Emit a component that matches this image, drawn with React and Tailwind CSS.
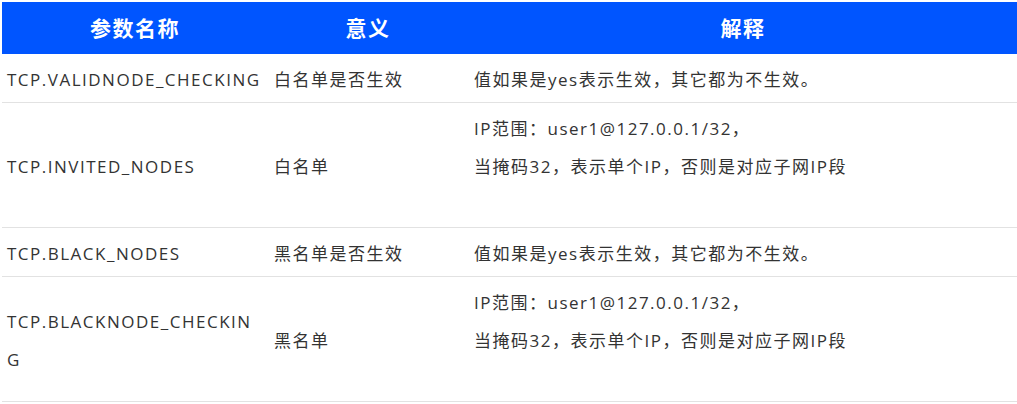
const rows = [
  {
    name: 'TCP.VALIDNODE_CHECKING',
    meaning: '白名单是否生效',
    desc: ['值如果是yes表示生效，其它都为不生效。'],
  },
  {
    name: 'TCP.INVITED_NODES',
    meaning: '白名单',
    desc: ['IP范围：user1@127.0.0.1/32，', '当掩码32，表示单个IP，否则是对应子网IP段', ''],
  },
  {
    name: 'TCP.BLACK_NODES',
    meaning: '黑名单是否生效',
    desc: ['值如果是yes表示生效，其它都为不生效。'],
  },
  {
    name: 'TCP.BLACKNODE_CHECKING',
    meaning: '黑名单',
    desc: ['IP范围：user1@127.0.0.1/32，', '当掩码32，表示单个IP，否则是对应子网IP段', ''],
  },
];

const App = () => {
  return (
    <div className="w-[1017px] h-[404px] overflow-hidden bg-white pt-[2px] pl-[2px] font-['Open_Sans','Noto_Sans_CJK_SC',sans-serif]">
      <table className="w-[1016px] table-fixed border-collapse">
        <colgroup>
          <col className="w-[266px]" />
          <col className="w-[200px]" />
          <col className="w-[550px]" />
        </colgroup>
        <thead>
          <tr className="bg-[#0055ff] h-[52px]">
            <th className="text-center text-[21px] font-bold text-white tracking-[1.5px] font-['Noto_Sans_CJK_SC',sans-serif]">参数名称</th>
            <th className="text-center text-[21px] font-bold text-white tracking-[1.5px] font-['Noto_Sans_CJK_SC',sans-serif]">意义</th>
            <th className="text-center text-[21px] font-bold text-white tracking-[1.5px] font-['Noto_Sans_CJK_SC',sans-serif]">解释</th>
          </tr>
        </thead>
        <tbody>
          {rows.map((row) => (
            <tr key={row.name} className="border-b border-[#e2e2e2] text-[17px] leading-[38px] text-[#333333] tracking-[1.5px]">
              <td className="px-[5px] pt-[7px] pb-[3px] align-middle break-all">{row.name}</td>
              <td className="px-[6px] pt-[7px] pb-[3px] align-middle">{row.meaning}</td>
              <td className="px-[6px] pt-[7px] pb-[3px] align-middle">
                {row.desc.map((line, i) => (
                  <div key={i} className="min-h-[38px]">{line}</div>
                ))}
              </td>
            </tr>
          ))}
        </tbody>
      </table>
    </div>
  );
};

export default App;
